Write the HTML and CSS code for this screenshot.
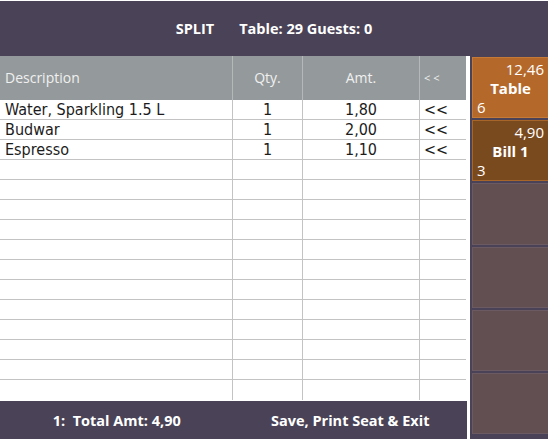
FILE: index.html
```html
<!DOCTYPE html>
<html>
<head>
<meta charset="utf-8">
<link rel="stylesheet" href="styles.css">
</head>
<body>
<div class="app">
  <div class="topbar">
    <span class="title">SPLIT</span>
    <span class="title">Table: 29 Guests: 0</span>
  </div>
  <div class="main">
    <div class="left">
      <div class="grid">
        <div class="row head">
          <div class="c c1">Description</div>
          <div class="c c2">Qty.</div>
          <div class="c c3">Amt.</div>
          <div class="c c4 small">&lt; &lt;</div>
        </div>
        <div class="row"><div class="c c1">Water, Sparkling 1.5 L</div><div class="c c2">1</div><div class="c c3">1,80</div><div class="c c4">&lt;&lt;</div></div>
        <div class="row"><div class="c c1">Budwar</div><div class="c c2">1</div><div class="c c3">2,00</div><div class="c c4">&lt;&lt;</div></div>
        <div class="row"><div class="c c1">Espresso</div><div class="c c2">1</div><div class="c c3">1,10</div><div class="c c4">&lt;&lt;</div></div>
        <div class="row"><div class="c c1"></div><div class="c c2"></div><div class="c c3"></div><div class="c c4"></div></div>
        <div class="row"><div class="c c1"></div><div class="c c2"></div><div class="c c3"></div><div class="c c4"></div></div>
        <div class="row"><div class="c c1"></div><div class="c c2"></div><div class="c c3"></div><div class="c c4"></div></div>
        <div class="row"><div class="c c1"></div><div class="c c2"></div><div class="c c3"></div><div class="c c4"></div></div>
        <div class="row"><div class="c c1"></div><div class="c c2"></div><div class="c c3"></div><div class="c c4"></div></div>
        <div class="row"><div class="c c1"></div><div class="c c2"></div><div class="c c3"></div><div class="c c4"></div></div>
        <div class="row"><div class="c c1"></div><div class="c c2"></div><div class="c c3"></div><div class="c c4"></div></div>
        <div class="row"><div class="c c1"></div><div class="c c2"></div><div class="c c3"></div><div class="c c4"></div></div>
        <div class="row"><div class="c c1"></div><div class="c c2"></div><div class="c c3"></div><div class="c c4"></div></div>
        <div class="row"><div class="c c1"></div><div class="c c2"></div><div class="c c3"></div><div class="c c4"></div></div>
        <div class="row"><div class="c c1"></div><div class="c c2"></div><div class="c c3"></div><div class="c c4"></div></div>
        <div class="row last"><div class="c c1"></div><div class="c c2"></div><div class="c c3"></div><div class="c c4"></div></div>
      </div>
      <div class="footer">
        <div class="fcell">1:&nbsp; Total Amt: 4,90</div>
        <div class="fcell">Save, Print Seat &amp; Exit</div>
      </div>
    </div>
    <div class="side">
      <div class="btn orange">
        <div class="amt">12,46</div>
        <div class="name">Table</div>
        <div class="cnt">6</div>
      </div>
      <div class="btn brown">
        <div class="amt">4,90</div>
        <div class="name">Bill 1</div>
        <div class="cnt">3</div>
      </div>
      <div class="btn empty"></div>
      <div class="btn empty"></div>
      <div class="btn empty"></div>
      <div class="btn empty"></div>
    </div>
  </div>
</div>
</body>
</html>
```
FILE: styles.css
```css
html, body {
  margin: 0;
  padding: 0;
  background: #ffffff;
  overflow: hidden;
}
.app {
  width: 548px;
  height: 439px;
  padding-top: 1px;
  box-sizing: border-box;
  display: flex;
  flex-direction: column;
  font-family: "Open Sans", "Noto Sans", sans-serif;
}
.topbar {
  height: 55px;
  flex: none;
  background: #4a4357;
  display: flex;
  align-items: center;
  justify-content: center;
  gap: 25px;
  box-sizing: border-box;
}
.title {
  color: #ffffff;
  font-weight: 700;
  font-size: 14.5px;
}
.main {
  flex: 1;
  display: flex;
  min-height: 0;
}
.left {
  width: 467px;
  display: flex;
  flex-direction: column;
}
.grid {
  flex: 1;
  width: 466px;
  display: flex;
  flex-direction: column;
}
.row {
  height: 20px;
  display: grid;
  grid-template-columns: 233px 70px 117px 46px;
  border-bottom: 1px solid #c3c3c3;
  box-sizing: border-box;
  font-family: "DejaVu Sans Condensed", "DejaVu Sans", sans-serif;
  font-size: 16px;
  color: #1c1c1c;
}
.row.last {
  border-bottom: none;
}
.row.head {
  height: 44px;
  background: #949a9b;
  border-bottom: none;
  color: #f0f0f0;
  font-family: "Open Sans", "Noto Sans", sans-serif;
  font-size: 14px;
}
.c {
  border-right: 1px solid #c3c3c3;
  display: flex;
  align-items: center;
  justify-content: center;
  line-height: 19px;
  white-space: nowrap;
  overflow: hidden;
}
.head .c {
  border-right-color: #b4b8b9;
  line-height: 44px;
}
.c1 {
  justify-content: flex-start;
  padding-left: 5px;
}
.c4 {
  border-right: none;
  justify-content: flex-start;
  padding-left: 4px;
}
.small {
  font-size: 11px;
}
.footer {
  height: 38px;
  margin-top: 1px;
  flex: none;
  background: #4a4357;
  display: grid;
  grid-template-columns: 1fr 1fr;
  color: #ffffff;
  font-weight: 700;
  font-size: 14.5px;
}
.fcell {
  display: flex;
  align-items: center;
  justify-content: center;
}
.side {
  margin-left: 3px;
  flex: 1;
  background: #4a4357;
  padding: 1px 0 5px 2px;
  display: flex;
  flex-direction: column;
  gap: 2px;
}
.btn {
  flex: 1;
  box-sizing: border-box;
  border: 1px solid transparent;
  border-right: none;
  color: #ffffff;
  display: flex;
  flex-direction: column;
  font-size: 15px;
  padding: 2px 4px 1px 4px;
}
.orange {
  background: #b4692b;
  border-color: #c67a37;
}
.brown {
  background: #7a4a1f;
  border-color: #a8652a;
}
.empty {
  background: #624f51;
  border-color: #6b5a62;
}
.amt {
  text-align: right;
  line-height: 18px;
}
.name {
  text-align: center;
  font-weight: 700;
  line-height: 20px;
}
.cnt {
  text-align: left;
  line-height: 18px;
  margin-top: auto;
}
```
